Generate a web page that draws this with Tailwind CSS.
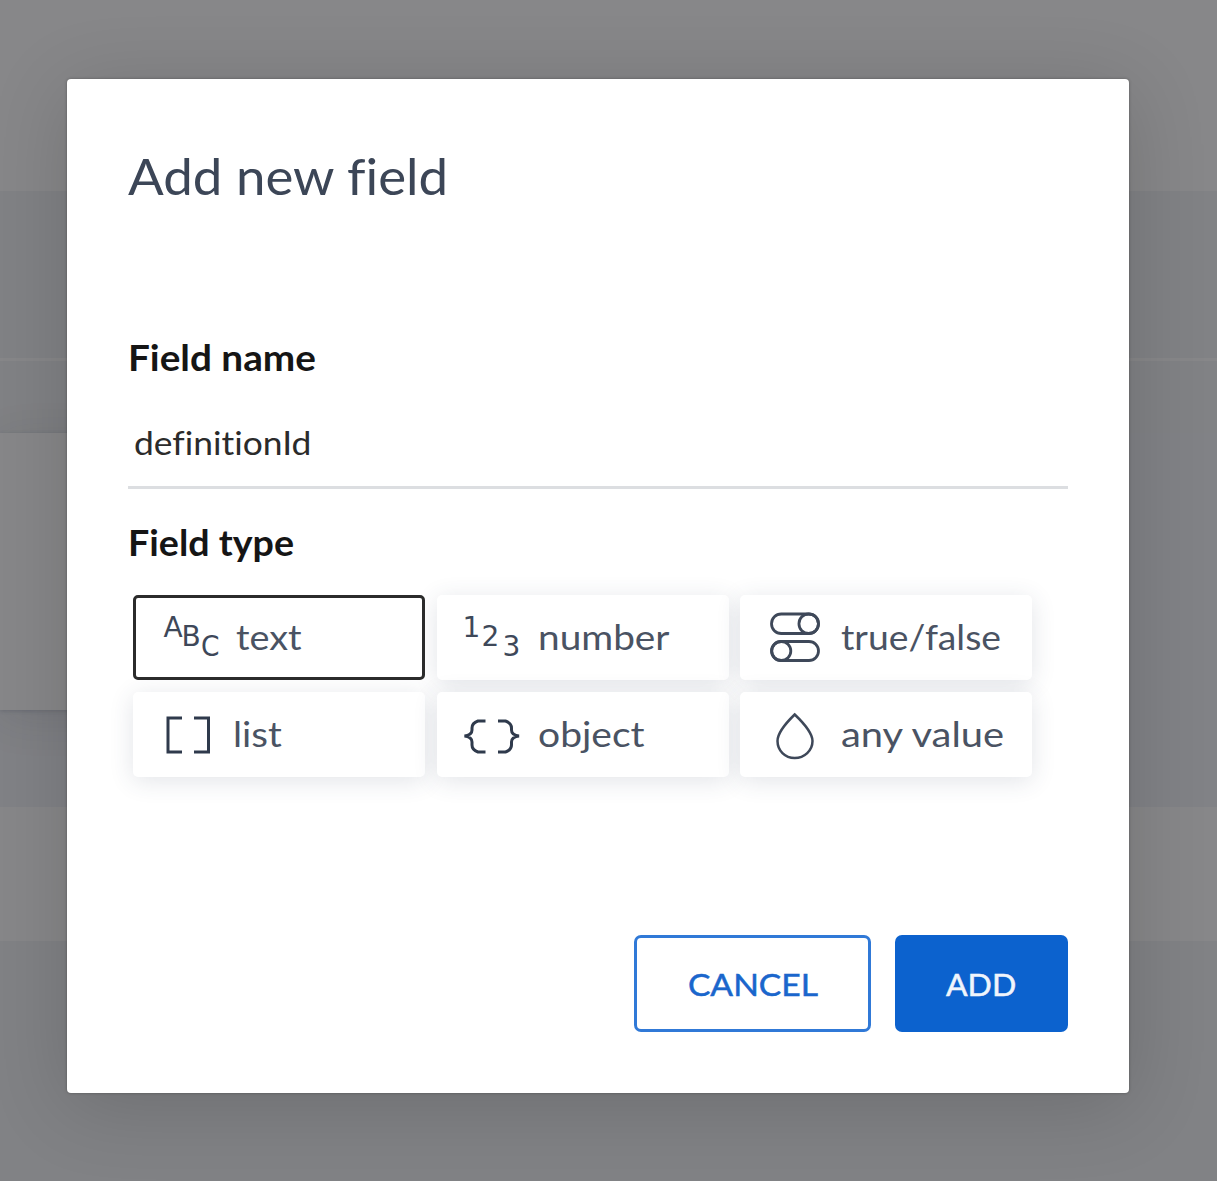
<!DOCTYPE html>
<html lang="en">
<head>
<meta charset="utf-8">
<title>Add new field</title>
<script src="https://cdn.jsdelivr.net/npm/@tailwindcss/browser@4"></script>
</head>
<body class="relative w-[1217px] h-[1181px] overflow-hidden bg-[#818286] font-[Lato,sans-serif] [font-variant-ligatures:none]">
  <!-- dimmed page behind the dialog -->
  <div class="absolute inset-0 flex flex-col">
    <div class="h-[191px] bg-[#878789]"></div>
    <div class="h-[167px] bg-[#818285]"></div>
    <div class="h-[3px] bg-[#878789]"></div>
    <div class="h-[72px] bg-[#818285]"></div>
    <div class="h-[277px] flex"><div class="w-[600px] bg-[#878789] shadow-[0_8px_40px_rgba(40,45,60,0.12),0_1px_4px_rgba(40,45,60,0.2)]"></div></div>
    <div class="h-[97px]"></div>
    <div class="relative h-[134px] bg-[#878789]"></div>
    <div class="h-[240px] bg-[#818285]"></div>
  </div>
  <div class="relative h-full pt-[79px] pl-[67px]">
    <main class="w-[1062px] h-[1013.5px] bg-white rounded-[4px] px-[61px] flex flex-col shadow-[0_12px_80px_rgba(0,0,0,0.16),0_0_3px_rgba(0,0,0,0.3)]">
      <h1 class="mt-[65px] h-[64px] leading-[64px] text-[50px] text-[#3c4657] whitespace-nowrap"><span class="inline-block origin-left scale-x-[1.057]">Add new field</span></h1>
      <div class="mt-[127px] h-[44px] leading-[44px] text-[36px] font-bold text-[#151515] whitespace-nowrap"><span class="inline-block origin-left scale-x-[1.075]">Field name</span></div>
      <div class="mt-[31px] h-[79px] pl-[6px] pt-[10px] leading-[44px] text-[33px] text-[#2b2b2b] border-b-[3px] border-[#dcdee1] whitespace-nowrap"><span class="inline-block origin-left scale-x-[1.073]">definitionId</span></div>
      <div class="mt-[31px] h-[44px] leading-[44px] text-[36px] font-bold text-[#151515] whitespace-nowrap"><span class="inline-block origin-left scale-x-[1.045]">Field type</span></div>
      <div class="mt-[31px] ml-[5px] grid grid-cols-[292px_292px_292px] grid-rows-[85px_85px] gap-x-[11.5px] gap-y-[12px] text-[35px] leading-[82px] text-[#4a5363] whitespace-nowrap">
        <div class="relative z-10 flex rounded-[5px] border-[3px] border-[#2b2b2b] bg-white pl-[27px]">
          <svg class="-mt-[3px] h-[85px] w-[73px] shrink-0 overflow-visible" viewBox="163 595 73 85" fill="#3e4859" font-family="DejaVu Sans" font-size="28"><text x="163.500" y="637">A</text><text x="181.500" y="646">B</text><text x="201" y="655.500" textLength="18.500" lengthAdjust="spacingAndGlyphs">C</text></svg>
          <span class="-mt-[3px] origin-left scale-x-[1.08]">text</span>
        </div>
        <div class="relative flex rounded-[5px] bg-white pl-[27px] shadow-[0_4px_24px_rgba(50,65,90,0.14)]">
          <svg class="h-[85px] w-[74px] shrink-0 overflow-visible" viewBox="464 595 74 85" fill="#3e4859" font-family="DejaVu Sans" font-size="28"><text x="462.500" y="637">1</text><text x="481.500" y="646">2</text><text x="502.500" y="655.500">3</text></svg>
          <span class="origin-left scale-x-[1.108]">number</span>
        </div>
        <div class="relative flex rounded-[5px] bg-white pl-[30px] shadow-[0_4px_24px_rgba(50,65,90,0.14)]">
          <svg class="h-[85px] w-[71px] shrink-0" viewBox="770 595 71 85" fill="none" stroke="#3e4859" stroke-width="2.800"><rect x="771.500" y="614" width="47" height="19.500" rx="9.750"/><circle cx="808.700" cy="623.750" r="9.750"/><rect x="771.500" y="641.500" width="47" height="19" rx="9.500"/><circle cx="781.300" cy="651" r="9.500"/></svg>
          <span class="origin-left scale-x-[1.065]">true/false</span>
        </div>
        <div class="relative flex rounded-[5px] bg-white pl-[30px] shadow-[0_4px_24px_rgba(50,65,90,0.14)]">
          <svg class="h-[85px] w-[70px] shrink-0" viewBox="163 692 70 85" fill="none" stroke="#2f3a4c" stroke-width="3"><path d="M182 718h-14v34h14M194 718h14.500v34h-14.500"/></svg>
          <span class="origin-left scale-x-[1.1]">list</span>
        </div>
        <div class="relative flex rounded-[5px] bg-white pl-[27px] shadow-[0_4px_24px_rgba(50,65,90,0.14)]">
          <svg class="h-[85px] w-[74px] shrink-0 overflow-visible" viewBox="464 692 74 85" fill="none" stroke="#2f3a4c" stroke-width="3"><path d="M485.500 721h-7.500q-6 2-6 7v2q0 5-7.500 6q7.500 1 7.500 6v3q0 5 6 7h7.500M498 721h7.500q6 2 6 7v2q0 5 7.500 6q-7.500 1-7.500 6v3q0 5-6 7h-7.500"/></svg>
          <span class="origin-left scale-x-[1.115]">object</span>
        </div>
        <div class="relative flex rounded-[5px] bg-white pl-[30px] shadow-[0_4px_24px_rgba(50,65,90,0.14)]">
          <svg class="h-[85px] w-[71px] shrink-0" viewBox="770 692 71 85" fill="none" stroke="#3e4859" stroke-width="2.500"><path d="M794.700 714.500C788 721 777.500 732 777.500 741c0 9.500 7.500 17 17.200 17s17.800-7.500 17.800-17c0-9-11-20-17.800-26.500z"/></svg>
          <span class="origin-left scale-x-[1.14]">any value</span>
        </div>
      </div>
      <div class="mt-[158px] flex justify-end gap-[24px] text-[31px] whitespace-nowrap [-webkit-text-stroke:0.5px]">
        <button class="h-[97px] w-[237px] rounded-[7px] border-[3px] border-[#3079d7] text-[#1a66cc] leading-[93px]"><span class="inline-block scale-x-[1.085]">CANCEL</span></button>
        <button class="h-[97px] w-[173px] rounded-[7px] bg-[#0c62ce] text-[#f0f5fc] leading-[99px]"><span class="inline-block scale-x-[1.03]">ADD</span></button>
      </div>
    </main>
  </div>
</body>
</html>
